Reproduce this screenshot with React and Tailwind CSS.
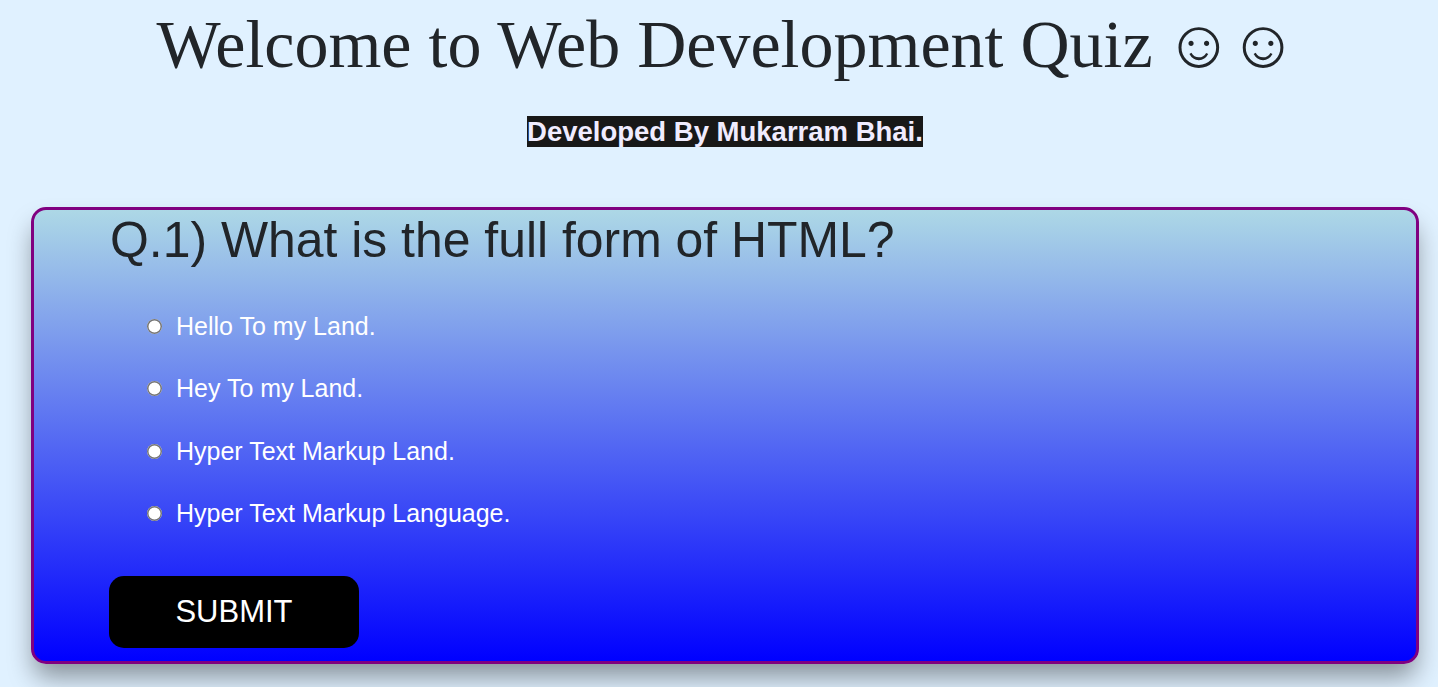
export default function App() {
  const options = ["Hello To my Land.", "Hey To my Land.", "Hyper Text Markup Land.", "Hyper Text Markup Language."];
  return (
    <div className="h-[687px] overflow-hidden bg-[#e0f1ff] font-['Liberation_Sans',Arial,sans-serif] text-[#212529]">
      <h1 className="h-[88px] pl-[5.5px] text-center font-['Liberation_Serif',Georgia,serif] text-[68px] leading-[88px] font-normal">
        Welcome to Web Development Quiz <span className="ml-[-5.5px] tracking-[-11px]">☺ ☺</span>
      </h1>
      <p className="mt-[28px] h-[32px] pl-[12px] text-center text-[27.5px] leading-[32px] font-bold">
        <span className="bg-[#181818] text-[#f0ecff]">Developed By Mukarram Bhai.</span>
      </p>
      <div className="ml-[31px] mr-[19px] mt-[59px] h-[457px] rounded-[15px] border-[3px] border-[#800080] bg-[linear-gradient(to_bottom,#add8e6,#0000ff)] pl-[75px] shadow-[0_16px_26px_-3px_rgba(0,0,0,0.4)]">
        <h2 className="h-[60px] pl-px text-[49.9px] leading-[60px] font-normal">Q.1) What is the full form of HTML?</h2>
        <ul className="mt-[37px] flex flex-col gap-[24.5px] pl-[38px]">
          {options.map((o) => (
            <li key={o} className="flex h-[38px] items-center gap-[14px] text-[25px] leading-[38px] text-white">
              <input type="radio" name="q" className="m-0 h-[15px] w-[15px] appearance-none rounded-full bg-white shadow-[inset_0_0_0_1.5px_#767676]" />
              <span className="-mt-px">{o}</span>
            </li>
          ))}
        </ul>
        <button className="mt-[43px] block h-[72px] w-[250px] rounded-[15px] bg-black pt-[2px] text-[31px] text-white">SUBMIT</button>
      </div>
    </div>
  );
}
